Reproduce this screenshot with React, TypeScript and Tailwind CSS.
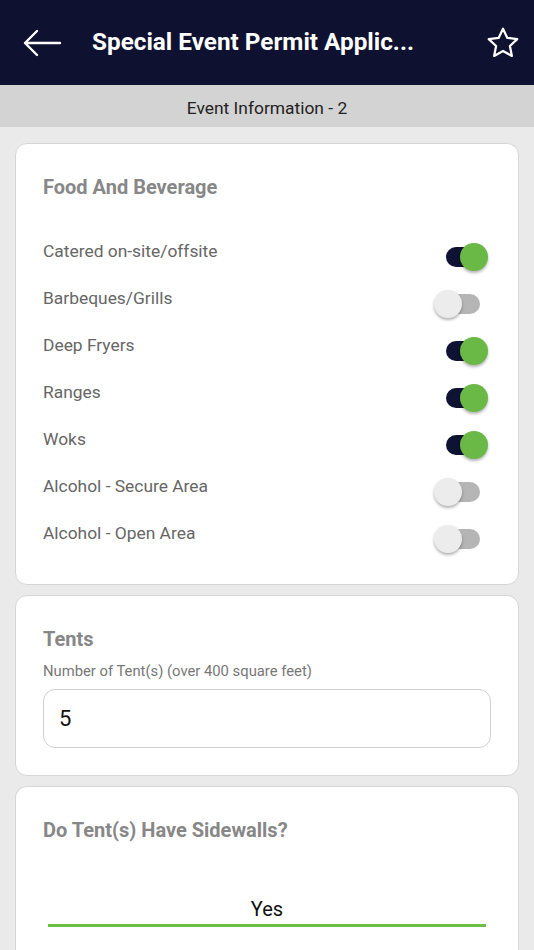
import React, { useState } from 'react';

const items = [
  { label: 'Catered on-site/offsite', on: true },
  { label: 'Barbeques/Grills', on: false },
  { label: 'Deep Fryers', on: true },
  { label: 'Ranges', on: true },
  { label: 'Woks', on: true },
  { label: 'Alcohol - Secure Area', on: false },
  { label: 'Alcohol - Open Area', on: false },
];

const Toggle: React.FC<{ on: boolean; onClick: () => void }> = ({ on, onClick }) => (
  <button type="button" onClick={onClick} className="relative h-[28px] w-[56px] shrink-0">
    <span
      className={`absolute left-[12px] top-[4px] h-[20px] w-[34px] rounded-full ${on ? 'bg-[#0e1233]' : 'bg-[#b5b5b5]'}`}
    />
    <span
      className={`absolute top-0 h-[28px] w-[28px] rounded-full shadow-[0_2px_3px_rgba(0,0,0,0.3)] ${
        on ? 'left-[26px] bg-[#6ab845]' : 'left-[0px] bg-[#ececec]'
      }`}
    />
  </button>
);

export default function App() {
  const [state, setState] = useState(items.map((i) => i.on));

  return (
    <div className="min-h-screen bg-[#eaeaea] font-['Roboto',sans-serif]">
      <header className="flex h-[85px] items-center bg-[#0e1230] px-[22px]">
        <svg width="40" height="28" viewBox="0 0 40 28" fill="none" stroke="white" strokeWidth="2.4" strokeLinecap="round" strokeLinejoin="round">
          <path d="M38 14H3M15 2L3 14l12 12" />
        </svg>
        <h1 className="ml-[30px] flex-1 truncate text-[24.3px] font-bold text-white">Special Event Permit Applic...</h1>
        <svg width="38" height="36" viewBox="0 0 24 24" fill="none" stroke="white" strokeWidth="1.5" strokeLinejoin="round" className="-mr-[10px]">
          <path d="M12 2.5l2.9 6.1 6.6.8-4.9 4.6 1.3 6.6L12 17.3l-5.9 3.3 1.3-6.6-4.9-4.6 6.6-.8z" />
        </svg>
      </header>
      <div className="flex h-[42px] items-center justify-center bg-[#d3d3d3] pt-[4px] text-[17.4px] text-[#222]">
        Event Information - 2
      </div>

      <main className="flex flex-col gap-[10px] px-[15px] pt-[16px]">
        <section className="rounded-[12px] border border-[#d6d6d6] bg-white px-[27px] pb-[29px] pt-[30px]">
          <h2 className="text-[20px] font-bold leading-[26px] text-[#878787]">Food And Beverage</h2>
          <div className="mt-[45px] flex flex-col gap-[19px]">
            {items.map((it, i) => (
              <div key={it.label} className="flex h-[28px] items-start justify-between">
                <span className="-mt-[7px] text-[17.4px] text-[#666]">{it.label}</span>
                <span className="mr-[1px] mt-[-2px]">
                  <Toggle
                    on={state[i]}
                    onClick={() => setState((s) => s.map((v, j) => (j === i ? !v : v)))}
                  />
                </span>
              </div>
            ))}
          </div>
        </section>

        <section className="rounded-[12px] border border-[#d6d6d6] bg-white px-[27px] pb-[27px] pt-[30px]">
          <h2 className="text-[20px] font-bold leading-[26px] text-[#878787]">Tents</h2>
          <p className="mt-[8px] text-[14.8px] text-[#777]">Number of Tent(s) (over 400 square feet)</p>
          <input
            defaultValue="5"
            className="mt-[7px] h-[59px] w-full rounded-[12px] border border-[#d0d0d0] px-[15px] text-[22px] text-[#111] outline-none"
          />
        </section>

        <section className="rounded-t-[12px] border border-b-0 border-[#d6d6d6] bg-white px-[27px] pb-[30px] pt-[30px]">
          <h2 className="text-[20px] font-bold leading-[26px] text-[#878787]">Do Tent(s) Have Sidewalls?</h2>
          <div className="mx-[5px] mt-[51px] border-b-[3px] border-[#6cbf45] pb-0 text-center text-[20px] text-[#111]">
            Yes
          </div>
        </section>
      </main>
    </div>
  );
}
